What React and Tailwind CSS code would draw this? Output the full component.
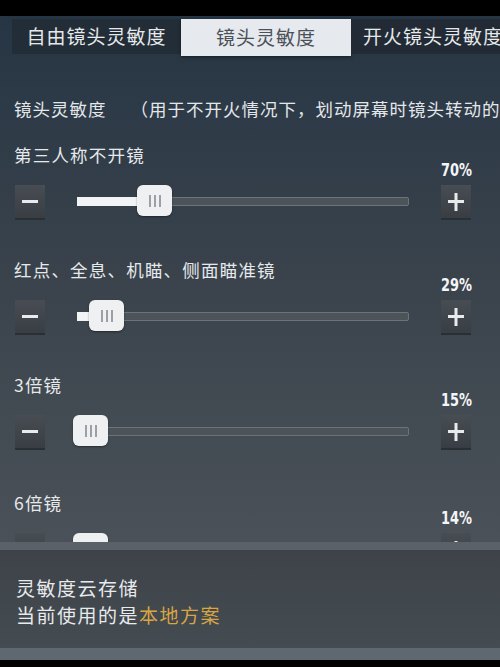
import React from "react";

const cjk = { fontFamily: '"Noto Sans CJK SC", "Noto Sans", sans-serif' };
const num = { fontFamily: '"DejaVu Sans Condensed", "DejaVu Sans", sans-serif' };

const sliders = [
  { label: "第三人称不开镜", value: "70%", thumb: 64 },
  { label: "红点、全息、机瞄、侧面瞄准镜", value: "29%", thumb: 16 },
  { label: "3倍镜", value: "15%", thumb: 0 },
  { label: "6倍镜", value: "14%", thumb: 0, extra: true },
];

function StepButton({ plus }) {
  return (
    <div className="relative flex h-[33px] w-[30px] items-center justify-center bg-gradient-to-b from-[#474d53] to-[#393e44] shadow-[0_2px_0_#2a2f34]">
      <div className="h-[3px] w-[16px] bg-[#e8eaec]" />
      {plus && (
        <div className="absolute left-1/2 top-1/2 h-[18px] w-[3px] -translate-x-1/2 -translate-y-1/2 bg-[#e8eaec]" />
      )}
    </div>
  );
}

function Slider({ thumb }) {
  return (
    <div className="relative h-[33px] w-[340px]">
      <div className="absolute left-[4px] right-[4px] top-[12px] h-[9px] rounded-[2px] border border-[#6c747a] bg-[#4c545a]" />
      <div
        className="absolute left-[4px] top-[12px] h-[9px] bg-[#f2f3f4]"
        style={{ width: thumb + 14 }}
      />
      <div
        className="absolute top-0 flex h-[31px] w-[35px] items-center justify-center gap-[3px] rounded-[6px] bg-[#eef0f2] shadow-[0_1px_2px_rgba(0,0,0,0.4)]"
        style={{ left: thumb }}
      >
        <div className="h-[12px] w-[2px] bg-[#9aa0a6]" />
        <div className="h-[12px] w-[2px] bg-[#9aa0a6]" />
        <div className="h-[12px] w-[2px] bg-[#9aa0a6]" />
      </div>
    </div>
  );
}

export default function App() {
  return (
    <div className="flex h-[667px] w-[500px] flex-col overflow-hidden bg-black" style={cjk}>
      <div className="h-[16px] shrink-0 bg-black" />
      <div className="relative h-[526px] shrink-0 overflow-hidden bg-gradient-to-b from-[#263544] via-[#3a434c] via-50% to-[#4a5158]">
        <div className="flex h-[40px] items-start pl-[12px] pt-[3px]">
          <div className="flex h-[35px] w-[169px] items-center justify-center bg-[#232d37] text-[19px] tracking-[1px] text-[#e6e9eb]">
            自由镜头灵敏度
          </div>
          <div className="flex h-[37px] w-[170px] items-center justify-center bg-[#e6e9ed] text-[19px] tracking-[1px] text-[#4b5159] shadow-[0_1px_3px_rgba(0,0,0,0.5)]">
            镜头灵敏度
          </div>
          <div className="flex h-[35px] flex-1 items-center overflow-hidden whitespace-nowrap bg-[#222b35] pl-[12px] text-[19px] tracking-[1px] text-[#e6e9eb]">
            开火镜头灵敏度
          </div>
        </div>

        <div className="mt-[41px] flex h-[24px] items-center overflow-hidden whitespace-nowrap pl-[14px] text-[17.5px] tracking-[1px] text-[#e4e7ea]">
          <span>镜头灵敏度</span>
          <span className="ml-[24px]">（用于不开火情况下，划动屏幕时镜头转动的灵敏度）</span>
        </div>

        <div className="mt-[24px] flex flex-col gap-[42px]">
          {sliders.map((s) => (
            <div key={s.label} className={s.extra ? "mt-[3px]" : ""}>
              <div className="flex h-[20px] items-center pl-[14px] text-[17.5px] tracking-[1.2px] text-[#e6e9eb]">
                {s.label}
              </div>
              <div className="flex items-end pl-[15px]">
                <StepButton />
                <div className="ml-[28px]">
                  <Slider thumb={s.thumb} />
                </div>
                <div className="ml-[28px] flex w-[30px] flex-col items-center">
                  <div
                    className="mt-[-4px] mb-[6px] h-[18px] scale-x-[0.8] whitespace-nowrap text-[18px] font-bold leading-[18px] text-[#f4f5f6]"
                    style={num}
                  >
                    {s.value}
                  </div>
                  <StepButton plus />
                </div>
              </div>
            </div>
          ))}
        </div>
      </div>

      <div className="h-[8px] shrink-0 bg-[#5a6168]" />
      <div className="flex h-[98px] shrink-0 flex-col bg-gradient-to-b from-[#3d4349] to-[#444b51] pl-[16px] pt-[26px]">
        <div className="h-[24px] text-[19px] leading-[24px] tracking-[1.5px] text-[#e8eaec]">灵敏度云存储</div>
        <div className="mt-[3px] h-[24px] text-[19px] leading-[24px] tracking-[1.5px] text-[#e8eaec]">
          当前使用的是<span className="text-[#d8a545]">本地方案</span>
        </div>
      </div>
      <div className="h-[12px] shrink-0 bg-[#5e6870]" />
      <div className="flex-1 bg-black" />
    </div>
  );
}
